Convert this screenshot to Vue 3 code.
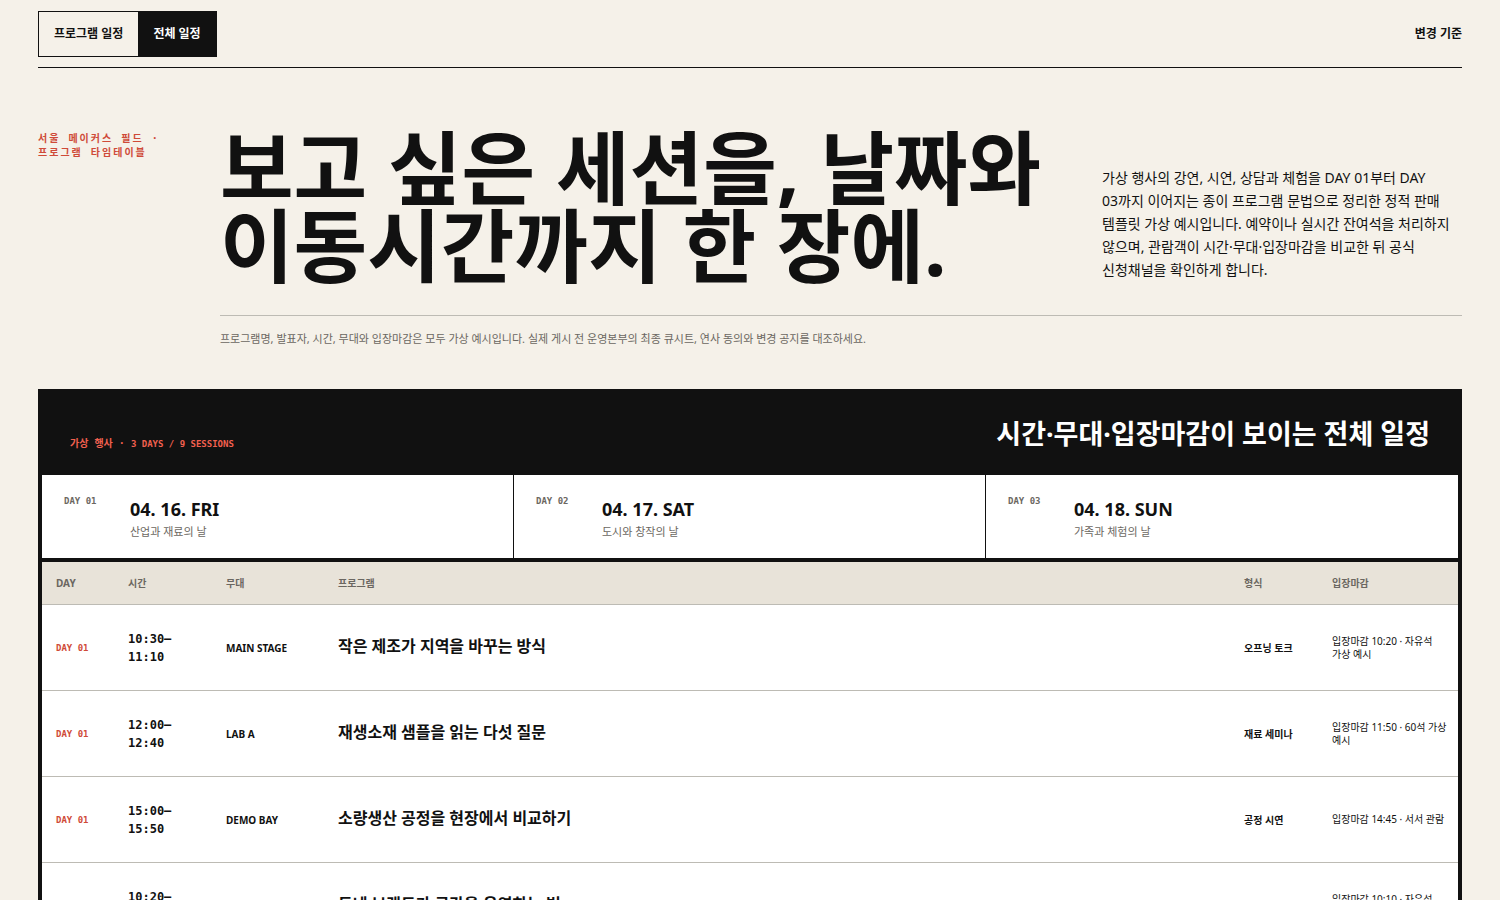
<script setup>
const days = [
  { label: 'DAY 01', date: '04. 16. FRI', theme: '산업과 재료의 날' },
  { label: 'DAY 02', date: '04. 17. SAT', theme: '도시와 창작의 날' },
  { label: 'DAY 03', date: '04. 18. SUN', theme: '가족과 체험의 날' },
]

const columns = [
  { key: 'day', label: 'DAY' },
  { key: 'time', label: '시간' },
  { key: 'stage', label: '무대' },
  { key: 'title', label: '프로그램' },
  { key: 'format', label: '형식' },
  { key: 'deadline', label: '입장마감' },
]

const sessions = [
  { day: 'DAY 01', time: '10:30–11:10', stage: 'MAIN STAGE', title: '작은 제조가 지역을 바꾸는 방식', format: '오프닝 토크', deadline: '입장마감 10:20 · 자유석 가상 예시' },
  { day: 'DAY 01', time: '12:00–12:40', stage: 'LAB A', title: '재생소재 샘플을 읽는 다섯 질문', format: '재료 세미나', deadline: '입장마감 11:50 · 60석 가상 예시' },
  { day: 'DAY 01', time: '15:00–15:50', stage: 'DEMO BAY', title: '소량생산 공정을 현장에서 비교하기', format: '공정 시연', deadline: '입장마감 14:45 · 서서 관람' },
  { day: 'DAY 02', time: '10:20–11:00', stage: 'MAIN STAGE', title: '동네 브랜드가 공간을 운영하는 법', format: '사례 토크', deadline: '입장마감 10:10 · 자유석 가상 예시' },
]
</script>

<template>
  <div class="page">
    <header class="topbar">
      <nav class="tabs" aria-label="일정 보기">
        <a href="#program">프로그램 일정</a>
        <a href="#schedule" class="active" aria-current="page">전체 일정</a>
      </nav>
      <a class="policy" href="#changes">변경 기준</a>
    </header>

    <main>
      <section id="program" class="hero">
        <p class="kicker">서울 메이커스 필드 · 프로그램 타임테이블</p>
        <h1>보고 싶은 세션을, 날짜와<br />이동시간까지 한 장에.</h1>
        <p class="lead">가상 행사의 강연, 시연, 상담과 체험을 DAY 01부터 DAY 03까지 이어지는 종이 프로그램 문법으로 정리한 정적 판매 템플릿 가상 예시입니다. 예약이나 실시간 잔여석을 처리하지 않으며, 관람객이 시간·무대·입장마감을 비교한 뒤 공식 신청채널을 확인하게 합니다.</p>
        <p id="changes" class="note">프로그램명, 발표자, 시간, 무대와 입장마감은 모두 가상 예시입니다. 실제 게시 전 운영본부의 최종 큐시트, 연사 동의와 변경 공지를 대조하세요.</p>
      </section>

      <section id="schedule" class="schedule">
        <div class="schedule-head">
          <p>가상 행사 · <span>3 DAYS / 9 SESSIONS</span></p>
          <h2>시간·무대·입장마감이 보이는 전체 일정</h2>
        </div>
        <div class="days">
          <article v-for="d in days" :key="d.label" class="day-card">
            <span class="day-label">{{ d.label }}</span>
            <div>
              <h3>{{ d.date }}</h3>
              <p>{{ d.theme }}</p>
            </div>
          </article>
        </div>
        <table>
          <thead>
            <tr>
              <th v-for="c in columns" :key="c.key" scope="col" :class="'col-' + c.key">{{ c.label }}</th>
            </tr>
          </thead>
          <tbody>
            <tr v-for="s in sessions" :key="s.day + s.time">
              <td v-for="c in columns" :key="c.key" :class="'cell-' + c.key">{{ s[c.key] }}</td>
            </tr>
          </tbody>
        </table>
      </section>
    </main>
  </div>
</template>

<style>
body {
  margin: 0;
  background: #f5f1e9;
}
</style>

<style scoped>
.page {
  --ink: #111;
  --muted: #6b6761;
  --line: #bdbbb4;
  --red: #cf4a38;
  --mono: "DejaVu Sans Mono", "Noto Sans CJK KR", monospace;
  padding: 0 38px;
  color: var(--ink);
  font-family: "Noto Sans", "Noto Sans CJK KR", sans-serif;
  font-size: 14px;
  word-break: keep-all;
}

h1, h2, h3, p {
  margin: 0;
}

a {
  color: inherit;
  text-decoration: none;
}

.topbar {
  display: flex;
  align-items: center;
  justify-content: space-between;
  padding: 11px 0 10px;
  border-bottom: 1px solid var(--ink);
  font-size: 12px;
  font-weight: 700;
  line-height: 18px;
}

.tabs {
  display: flex;
  border: 1px solid var(--ink);
}

.tabs a {
  padding: 13px 15px;
}

.tabs .active {
  background: var(--ink);
  color: #fff;
}

.hero {
  display: grid;
  grid-template-columns: 142px minmax(0, 1fr) 360px;
  column-gap: 40px;
  padding: 60px 0 41px;
}

.kicker {
  padding-top: 4px;
  color: var(--red);
  font-family: var(--mono);
  font-size: 10px;
  font-weight: 700;
  line-height: 14px;
  letter-spacing: 2px;
}

h1 {
  font-size: 80px;
  font-weight: 700;
  line-height: 78px;
}

.lead {
  align-self: end;
  padding-bottom: 3px;
  font-size: 14px;
  line-height: 23px;
}

.note {
  grid-column: 2 / -1;
  margin-top: 31px;
  padding-top: 14px;
  border-top: 1px solid var(--line);
  color: var(--muted);
  font-size: 11px;
  line-height: 18px;
}

.schedule {
  border: 4px solid var(--ink);
  background: #fff;
}

.schedule-head {
  display: flex;
  align-items: flex-end;
  justify-content: space-between;
  padding: 24px 28px;
  background: var(--ink);
  color: #fff;
}

.schedule-head p {
  color: #f2604f;
  font-family: var(--mono);
  font-size: 10px;
  font-weight: 700;
  line-height: 14px;
}

.schedule-head span {
  font-size: 9px;
}

h2 {
  font-size: 27px;
  font-weight: 700;
  line-height: 34px;
}

.days {
  display: grid;
  grid-template-columns: repeat(3, minmax(0, 1fr));
  border-bottom: 4px solid var(--ink);
}

.day-card {
  display: grid;
  grid-template-columns: 48px 1fr;
  column-gap: 18px;
  padding: 20px 22px 17px;
  border-right: 1px solid var(--ink);
}

.day-card:last-child {
  border-right: 0;
}

.day-label {
  color: var(--muted);
  font-family: var(--mono);
  font-size: 9px;
  font-weight: 700;
  line-height: 12px;
}

h3 {
  font-size: 18px;
  font-weight: 700;
  line-height: 28px;
}

.day-card p {
  color: var(--muted);
  font-size: 11px;
  line-height: 18px;
}

table {
  width: 100%;
  table-layout: fixed;
  border-collapse: separate;
  border-spacing: 0;
}

th {
  padding: 14px;
  border-bottom: 1px solid var(--line);
  background: #e8e3d9;
  color: var(--muted);
  font-size: 10px;
  font-weight: 700;
  line-height: 14px;
  text-align: left;
}

.col-day { width: 44px; }
.col-time { width: 70px; }
.col-stage { width: 84px; }
.col-format { width: 60px; }
.col-deadline { width: 112px; }

td {
  height: 57px;
  padding: 14px;
  border-bottom: 1px solid var(--line);
  vertical-align: middle;
}

.cell-day {
  color: var(--red);
  font-family: var(--mono);
  font-size: 9px;
  font-weight: 700;
}

.cell-time {
  font-family: var(--mono);
  font-size: 12px;
  font-weight: 700;
  line-height: 18px;
}

.cell-stage,
.cell-format {
  font-size: 10px;
  font-weight: 700;
}

td.cell-title {
  height: 51px;
  padding-bottom: 20px;
  font-size: 16px;
  font-weight: 700;
}

td.cell-deadline {
  padding-right: 8px;
  font-size: 10px;
  line-height: 13px;
}
</style>
